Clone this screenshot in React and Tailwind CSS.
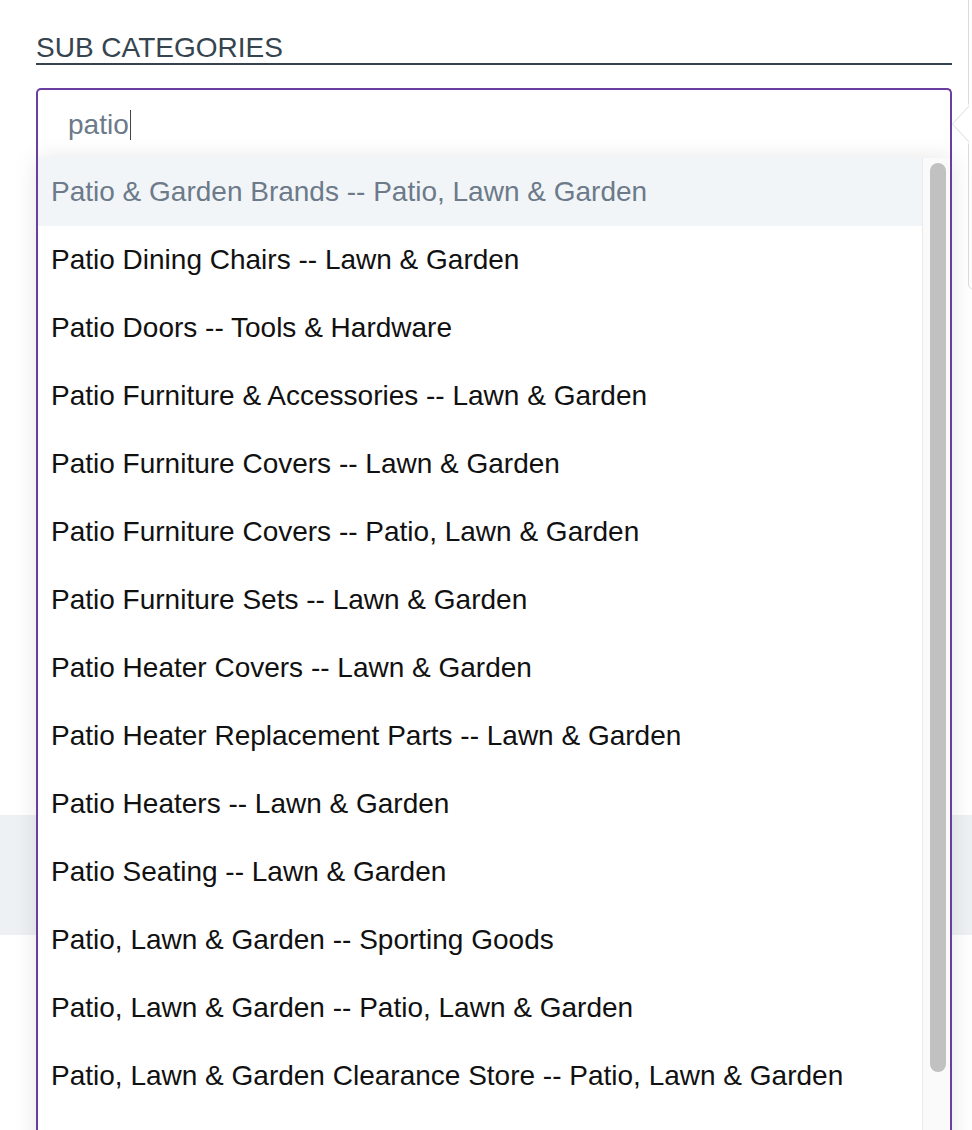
import React from "react";

const items = [
  "Patio & Garden Brands -- Patio, Lawn & Garden",
  "Patio Dining Chairs -- Lawn & Garden",
  "Patio Doors -- Tools & Hardware",
  "Patio Furniture & Accessories -- Lawn & Garden",
  "Patio Furniture Covers -- Lawn & Garden",
  "Patio Furniture Covers -- Patio, Lawn & Garden",
  "Patio Furniture Sets -- Lawn & Garden",
  "Patio Heater Covers -- Lawn & Garden",
  "Patio Heater Replacement Parts -- Lawn & Garden",
  "Patio Heaters -- Lawn & Garden",
  "Patio Seating -- Lawn & Garden",
  "Patio, Lawn & Garden -- Sporting Goods",
  "Patio, Lawn & Garden -- Patio, Lawn & Garden",
  "Patio, Lawn & Garden Clearance Store -- Patio, Lawn & Garden",
];

export default function App() {
  return (
    <div className="relative w-[972px] h-[1130px] overflow-hidden bg-white font-['Liberation_Sans',Arial,sans-serif]">
      <div className="ml-[36px] w-[916px] pt-[32px]">
        <div className="text-[28px] leading-[31px] text-[#35444e] border-b-2 border-[#35444e]">
          SUB CATEGORIES
        </div>
        <div className="mt-[23px] h-[70px] border-t-2 border-x-2 border-[#6b3fa0] rounded-t-[5px] pl-[30px] pt-[19px]">
          <div className="flex items-center text-[28px] leading-[32px] text-[#6c7a89]">
            <span>patio</span>
            <span className="inline-block w-px h-[30px] bg-[#444] ml-[1px]" />
          </div>
        </div>
      </div>

      <div className="mt-[657px] h-[120px] bg-[#eef1f4]" />

      {/* popover on the right */}
      <div className="absolute left-[968px] top-[-20px] w-[120px] h-[310px] border border-[#d5dce4] rounded-[6px] bg-white" />
      <svg className="absolute left-[951px] top-[104px]" width="19" height="42" viewBox="0 0 19 42">
        <polygon points="18,0 1,20 18,40" fill="white" />
        <polyline points="18,2 1.5,20 18,38" fill="none" stroke="#d5dce4" strokeWidth="1" />
      </svg>

      {/* dropdown list */}
      <div className="absolute left-[36px] top-[158px] w-[916px] h-[1000px] border-x-2 border-[#6b3fa0] bg-white shadow-[0_0_22px_rgba(0,0,0,0.1)] flex">
        <div className="flex-1 flex flex-col">
          {items.map((t, i) => (
            <div
              key={i}
              className={
                i === 0
                  ? "h-[68px] shrink-0 flex items-center pl-[13px] text-[28px] leading-[32px] text-[#6c7a89] bg-[#f2f5f8]"
                  : "h-[68px] shrink-0 flex items-center pl-[13px] text-[28px] leading-[32px] text-[#111]"
              }
            >
              {t}
            </div>
          ))}
        </div>
        <div className="w-[28px] shrink-0 bg-[#fafafa] border-l border-[#ebebeb] pt-[5px] pl-[7px]">
          <div className="w-[16px] h-[909px] rounded-full bg-[#c1c1c1]" />
        </div>
      </div>
    </div>
  );
}
